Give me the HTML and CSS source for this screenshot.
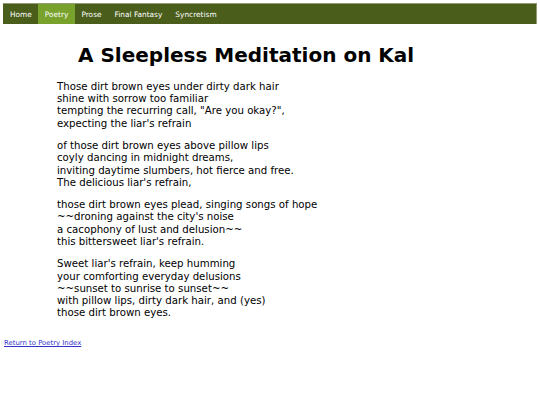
FILE: index.html
```html
<!DOCTYPE html>
<html>
<head>
<meta charset="utf-8">
<link rel="stylesheet" href="styles.css">
</head>
<body>
<nav class="nav">
  <a class="nav-item" href="#">Home</a>
  <a class="nav-item active" href="#">Poetry</a>
  <a class="nav-item" href="#">Prose</a>
  <a class="nav-item" href="#">Final Fantasy</a>
  <a class="nav-item" href="#">Syncretism</a>
</nav>
<main class="content">
  <h1 class="title">A Sleepless Meditation on Kal</h1>
  <p class="stanza">Those dirt brown eyes under dirty dark hair<br>shine with sorrow too familiar<br>tempting the recurring call, "Are you okay?",<br>expecting the liar's refrain</p>
  <p class="stanza">of those dirt brown eyes above pillow lips<br>coyly dancing in midnight dreams,<br>inviting daytime slumbers, hot fierce and free.<br>The delicious liar's refrain,</p>
  <p class="stanza">those dirt brown eyes plead, singing songs of hope<br>~~droning against the city's noise<br>a cacophony of lust and delusion~~<br>this bittersweet liar's refrain.</p>
  <p class="stanza">Sweet liar's refrain, keep humming<br>your comforting everyday delusions<br>~~sunset to sunrise to sunset~~<br>with pillow lips, dirty dark hair, and (yes)<br>those dirt brown eyes.</p>
</main>
<footer class="footer">
  <a class="back" href="#">Return to Poetry Index</a>
</footer>
</body>
</html>
```
FILE: styles.css
```css
html, body {
  margin: 0;
  padding: 0;
  background: #ffffff;
}
body {
  padding: 3px 3px 0 3px;
  font-family: "DejaVu Sans", Verdana, sans-serif;
  color: #000;
}
.nav {
  display: flex;
  background: #4a5d1b;
  border-top: 1px solid #8f9c73;
  border-right: 1px solid #8f9c73;
  height: 20px;
}
.nav-item {
  display: flex;
  align-items: center;
  padding: 0 6.5px;
  font-size: 7.4px;
  color: #ffffff;
  text-decoration: none;
}
.nav-item:first-child {
  padding-left: 7px;
}
.nav-item.active {
  background: #79a22c;
}
.content {
  padding-left: 54px;
}
.title {
  margin: 18px 0 0 21px;
  font-size: 20px;
  font-weight: bold;
  line-height: 26px;
}
.stanza {
  margin: 13px 0 0 0;
  font-size: 10.2px;
  line-height: 12.2px;
}
.stanza + .stanza {
  margin-top: 10.3px;
}
.footer {
  margin-top: 11px;
  padding-left: 1px;
}
.back {
  font-size: 6.9px;
  color: #3333cc;
}
```
